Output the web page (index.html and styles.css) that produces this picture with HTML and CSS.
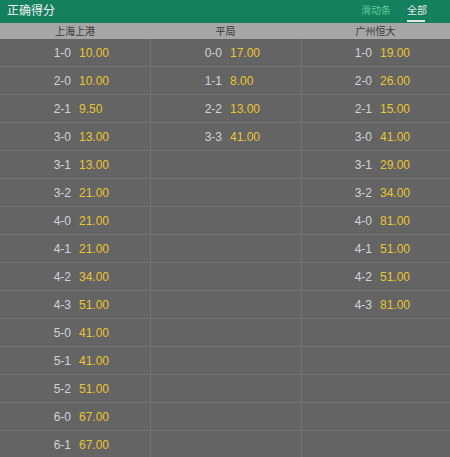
FILE: index.html
```html
<!DOCTYPE html>
<html lang="zh">
<head>
<meta charset="utf-8">
<link rel="stylesheet" href="styles.css">
</head>
<body>
<div class="topbar">
  <div class="title">正确得分</div>
  <div class="tabs">
    <span class="tab">滑动条</span>
    <span class="tab active">全部</span>
  </div>
</div>
<div class="heads">
  <div class="head">上海上港</div>
  <div class="head">平局</div>
  <div class="head">广州恒大</div>
</div>
<div class="grid">
  <div class="col">
    <div class="row"><span class="sc">1-0</span><span class="od">10.00</span></div>
    <div class="row"><span class="sc">2-0</span><span class="od">10.00</span></div>
    <div class="row"><span class="sc">2-1</span><span class="od">9.50</span></div>
    <div class="row"><span class="sc">3-0</span><span class="od">13.00</span></div>
    <div class="row"><span class="sc">3-1</span><span class="od">13.00</span></div>
    <div class="row"><span class="sc">3-2</span><span class="od">21.00</span></div>
    <div class="row"><span class="sc">4-0</span><span class="od">21.00</span></div>
    <div class="row"><span class="sc">4-1</span><span class="od">21.00</span></div>
    <div class="row"><span class="sc">4-2</span><span class="od">34.00</span></div>
    <div class="row"><span class="sc">4-3</span><span class="od">51.00</span></div>
    <div class="row"><span class="sc">5-0</span><span class="od">41.00</span></div>
    <div class="row"><span class="sc">5-1</span><span class="od">41.00</span></div>
    <div class="row"><span class="sc">5-2</span><span class="od">51.00</span></div>
    <div class="row"><span class="sc">6-0</span><span class="od">67.00</span></div>
    <div class="row"><span class="sc">6-1</span><span class="od">67.00</span></div>
  </div>
  <div class="col">
    <div class="row"><span class="sc">0-0</span><span class="od">17.00</span></div>
    <div class="row"><span class="sc">1-1</span><span class="od">8.00</span></div>
    <div class="row"><span class="sc">2-2</span><span class="od">13.00</span></div>
    <div class="row"><span class="sc">3-3</span><span class="od">41.00</span></div>
    <div class="row"></div><div class="row"></div><div class="row"></div>
    <div class="row"></div><div class="row"></div><div class="row"></div>
    <div class="row"></div><div class="row"></div><div class="row"></div>
    <div class="row"></div><div class="row"></div>
  </div>
  <div class="col">
    <div class="row"><span class="sc">1-0</span><span class="od">19.00</span></div>
    <div class="row"><span class="sc">2-0</span><span class="od">26.00</span></div>
    <div class="row"><span class="sc">2-1</span><span class="od">15.00</span></div>
    <div class="row"><span class="sc">3-0</span><span class="od">41.00</span></div>
    <div class="row"><span class="sc">3-1</span><span class="od">29.00</span></div>
    <div class="row"><span class="sc">3-2</span><span class="od">34.00</span></div>
    <div class="row"><span class="sc">4-0</span><span class="od">81.00</span></div>
    <div class="row"><span class="sc">4-1</span><span class="od">51.00</span></div>
    <div class="row"><span class="sc">4-2</span><span class="od">51.00</span></div>
    <div class="row"><span class="sc">4-3</span><span class="od">81.00</span></div>
    <div class="row"></div><div class="row"></div><div class="row"></div>
    <div class="row"></div><div class="row"></div>
  </div>
</div>
</body>
</html>
```

FILE: styles.css
```css
html, body {
  margin: 0;
  padding: 0;
  background: #646464;
  font-family: "Liberation Sans", "Noto Sans CJK SC", sans-serif;
  overflow: hidden;
}
.topbar {
  height: 23px;
  background: #14805e;
  display: flex;
  align-items: center;
  justify-content: space-between;
  padding: 0 0 0 7px;
}
.title {
  color: #f2f2f2;
  font-size: 12px;
  line-height: 23px;
}
.tabs {
  display: flex;
  gap: 16px;
  padding-right: 23px;
  height: 23px;
}
.tab {
  font-size: 10px;
  line-height: 22px;
  color: #5ccc98;
  position: relative;
}
.tab.active {
  color: #e6e6e6;
}
.tab.active::after {
  content: "";
  position: absolute;
  left: 0;
  right: 2px;
  top: 20px;
  height: 2px;
  background: #e6e6e6;
}
.heads {
  display: grid;
  grid-template-columns: 150px 151px 149px;
  height: 16px;
  background: #a6a6a6;
}
.head {
  text-align: center;
  font-size: 10px;
  line-height: 17px;
  color: #3a3a3a;
}
.grid {
  display: grid;
  grid-template-columns: 150px 151px 149px;
}
.col + .col {
  border-left: 1px solid #737373;
}
.row {
  height: 27px;
  border-bottom: 1px solid #737373;
  display: grid;
  grid-template-columns: 1fr 1fr;
  align-items: center;
  font-size: 12px;
  line-height: 28px;
}
.sc {
  text-align: right;
  padding-right: 4px;
  color: #cfd3d9;
}
.od {
  text-align: left;
  padding-left: 4px;
  color: #e9c630;
}
```
